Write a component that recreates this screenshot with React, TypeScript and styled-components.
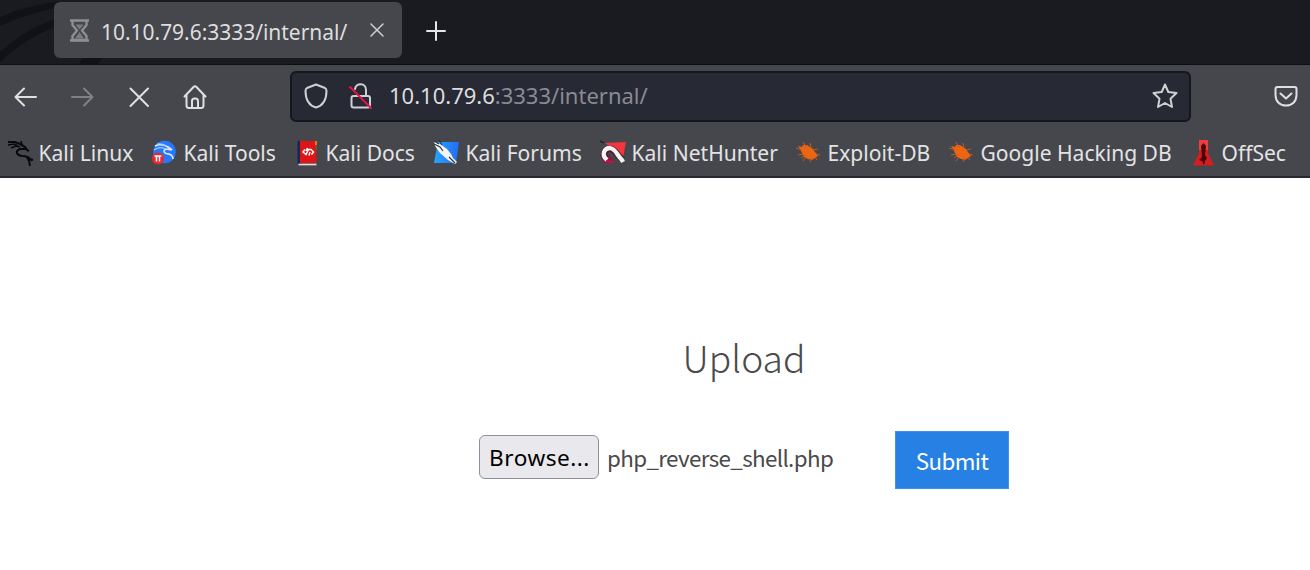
import React from 'react';
import styled, { createGlobalStyle } from 'styled-components';

const GlobalStyle = createGlobalStyle`
  * { box-sizing: border-box; }
  body { margin: 0; background: #fff; font-family: "Noto Sans", sans-serif; overflow: hidden; }
  svg { display: block; flex: none; overflow: visible; }
`;

const Window = styled.div`
  width: 1310px;
  height: 570px;
  display: flex;
  flex-direction: column;
  background: #fff;
`;

const TabStrip = styled.header`
  position: relative;
  height: 65px;
  flex: none;
  display: flex;
  align-items: flex-start;
  padding: 2px 0 0 54px;
  background: #1a1b20;
  border-bottom: 1px solid #0d0e11;
`;

const Wallpaper = styled.svg`
  position: absolute;
  left: 0;
  top: 0;
`;

const Tab = styled.div`
  position: relative;
  width: 348px;
  height: 56px;
  display: flex;
  align-items: center;
  padding: 0 18px 0 16px;
  border-radius: 6px;
  background: #45474d;
`;

const TabTitle = styled.span`
  margin: 3px auto 0 12px;
  font-size: 20.95px;
  line-height: 30px;
  color: #dededf;
  white-space: nowrap;
`;

const NewTab = styled.div`
  margin: 19px 0 0 24px;
`;

const Toolbar = styled.nav`
  height: 64px;
  flex: none;
  display: flex;
  align-items: center;
  padding: 0 12px 2px 0;
  background: #45474d;
`;

const NavButtons = styled.div`
  width: 290px;
  display: grid;
  grid-template-columns: 56px 57px 56px 57px;
  padding: 1px 0 0 13px;
  align-items: center;
`;

const UrlBar = styled.div`
  width: 901px;
  height: 51px;
  display: flex;
  align-items: center;
  padding: 0 11px 0 12px;
  background: #272935;
  border: 2px solid #16171d;
  border-radius: 6px;
`;

const SchemeIcon = styled.svg`
  margin-left: 20px;
`;

const Url = styled.span`
  margin: -2px auto 0 17px;
  font-size: 22px;
  line-height: 30px;
  color: #8a8b92;
  white-space: nowrap;
`;

const Host = styled.span`
  color: #dcdcdf;
`;

const Pocket = styled.div`
  margin-left: auto;
`;

const Bookmarks = styled.div`
  height: 49px;
  flex: none;
  display: grid;
  grid-template-columns: 145px 142px 140px 166px 196px 153px 241px 110px;
  align-items: center;
  padding: 0 0 0 7.500px;
  background: #45474d;
  border-bottom: 2px solid #28292e;
`;

const Bookmark = styled.div`
  display: flex;
  align-items: center;
  gap: 7px;
  font-size: 21.05px;
  line-height: 30px;
  color: #e3e3e4;
  white-space: nowrap;
`;

const Page = styled.main`
  flex: 1;
  display: flex;
  flex-direction: column;
  align-items: center;
  padding: 149px 0 0 178px;
  font-family: "Noto Sans CJK SC", sans-serif;
`;

const Title = styled.h1`
  margin: 0;
  height: 60px;
  font-size: 37.2px;
  line-height: 60px;
  font-weight: 300;
  color: #4a4a4a;
`;

const Form = styled.div`
  display: flex;
  align-items: flex-start;
  width: 530px;
  margin-top: 44px;
`;

const Browse = styled.button`
  width: 120px;
  height: 44px;
  margin: 4px 0 0 0;
  padding: 1px 0 0 1px;
  border: 1.5px solid #8f8f9d;
  border-radius: 6px;
  background: #e9e9ed;
  color: #000;
  font: 22.6px/40px "Noto Sans", sans-serif;
  letter-spacing: 0.5px;
  white-space: nowrap;
`;

const FileName = styled.span`
  margin: 8px 0 0 8px;
  width: 288px;
  font-size: 22.4px;
  letter-spacing: -0.64px;
  line-height: 36px;
  color: #4a4a4a;
  white-space: nowrap;
`;

const Submit = styled.button`
  width: 114px;
  height: 58px;
  padding: 0;
  border: 1px solid #4490e8;
  background: #2780e3;
  color: #fff;
  font: 22.4px/56px "Noto Sans CJK SC", sans-serif;
  letter-spacing: -0.6px;
`;

const line = {
  fill: 'none',
  strokeWidth: 2,
  strokeLinecap: 'round' as const,
  strokeLinejoin: 'round' as const,
};

const Exploit = () => (
  <svg width="24" height="24" viewBox="0 0 24 24">
    <path d="M1 5L5 6L6 4L10 4L13 6L16 8L18 11L21 15L18 17L15 19L11 18L7 16L5 12L3 8Z" fill="#ed6510" />
    <path d="M-1 7l6 2M1 14l5-1M6 1l3 5M13 2l1 5M16 9l5-1M19 13l4 1M6 20l3-4M13 21l2-4M4 17l4-3M18 16l2 3" stroke="#b85d2a" strokeWidth="1" fill="none" />
  </svg>
);

const icons: Record<string, React.ReactNode> = {
  linux: (
    <svg width="24" height="28" viewBox="0 0 24 28">
      <path d="M0 3L7 3L12 5L17 8L19 11L21 12" fill="none" stroke="#08090a" strokeWidth="2.2" />
      <path d="M0 6L6 5L10 7M3 9L8 7L12 8M14 6L13 2" fill="none" stroke="#08090a" strokeWidth="1.6" />
      <path d="M18 10L12 10C7 12 8 16 14 17C20 17 22 19 24 22M19 18L21 22L22 27M21 20L25 21" fill="none" stroke="#08090a" strokeWidth="2" />
    </svg>
  ),
  tools: (
    <svg width="24" height="26" viewBox="0 0 24 26">
      <circle cx="11.5" cy="12" r="11.3" fill="#2878fb" />
      <path d="M2 6Q8 3 15 7L19 10L13 9Q9 11 13 13.500Q20 14 20 19" fill="none" stroke="#dceaff" strokeWidth="1.6" />
      <path d="M1 10Q7 6 12 9M4 4Q9 3 13 6" fill="none" stroke="#a0c8ff" strokeWidth="1.2" />
      <circle cx="5" cy="18.500" r="6" fill="#ea2832" />
      <path d="M1.500 16H8.500M3.500 16V21.500M6.500 16V21.500" stroke="#fff" strokeWidth="1.5" />
    </svg>
  ),
  docs: (
    <svg width="24" height="26" viewBox="0 0 24 26">
      <path d="M2.500 1H7V24H2.500Z" fill="#17265a" />
      <path d="M5 1H21.500V23H5Z" fill="#df1417" />
      <path d="M20 1h2v4h-2z" fill="#e87417" />
      <path d="M20.500 5h1.500v5h-1.500z" fill="#526a30" />
      <path d="M3.500 24.500H21.500" stroke="#e7d7dd" strokeWidth="1.700" />
      <path d="M10 9.500L8 12L11 14.500L13.500 9.500L16 9.500L18.500 12L16.500 14.500M12.500 8L11 11M15 12L14 15.500" fill="none" stroke="#fff" strokeWidth="1.500" />
    </svg>
  ),
  forums: (
    <svg width="24" height="26" viewBox="0 0 24 26">
      <defs>
        <linearGradient id="sky"><stop stopColor="#27a6fc" /><stop offset="1" stopColor="#246cf8" /></linearGradient>
      </defs>
      <path d="M3 2H24L21 23H-1Z" fill="url(#sky)" />
      <path d="M-1 1L5 4L12 9L16 14L18 18L22 22L20 24L13 20L5 13L0 6Z" fill="#f4f5f4" />
      <path d="M-1 1L4 4M-1 4L5 7L8 11M4 0L7 5M14 17L20 23" fill="none" stroke="#293640" strokeWidth="1.2" />
    </svg>
  ),
  nethunter: (
    <svg width="24" height="26" viewBox="0 0 24 26">
      <path d="M4 3L25 2L22 18L12 9Z" fill="#f4353d" />
      <path d="M-1 15L3 23H14L8 15Z" fill="#981238" />
      <path d="M5 18C1 14 4 8 10 9C15 10 16 16 22 20" fill="none" stroke="#4b222d" strokeWidth="6.500" />
      <path d="M6 20C0 15 3 8 9 8C15 9 15 14 21 20L22 22" fill="none" stroke="#f5f5f5" strokeWidth="4.300" />
      <path d="M5 21L13 22" stroke="#bd194a" strokeWidth="2" />
      <path d="M-1 1L3 3" stroke="#252129" strokeWidth="1.500" />
    </svg>
  ),
  exploit: <Exploit />,
  offsec: (
    <svg width="24" height="28" viewBox="0 0 24 28">
      <path d="M8 1H17V14L23 26.500H2L8 14Z" fill="#d41e22" />
      <path d="M8 1H17V11H8Z" fill="#f03b3f" />
      <path d="M12.500 4L15 7L14 16L16 19L14 22L13 26L11 22L8 21L11 18L10 7Z" fill="#4a0508" />
    </svg>
  ),
};

const bookmarks = [
  ['linux', 'Kali Linux'],
  ['tools', 'Kali Tools'],
  ['docs', 'Kali Docs'],
  ['forums', 'Kali Forums'],
  ['nethunter', 'Kali NetHunter'],
  ['exploit', 'Exploit-DB'],
  ['exploit', 'Google Hacking DB'],
  ['offsec', 'OffSec'],
];

export default function App() {
  return (
    <Window>
      <GlobalStyle />
      <TabStrip>
        <Wallpaper width="110" height="64" viewBox="0 0 110 64">
          <path d="M0 17Q25 6 60 1V7Q25 14 0 26ZM0 52Q25 29 60 17V25Q25 38 0 62ZM79 64L83 57H102L98 64Z" fill="#111216" />
        </Wallpaper>
        <Tab>
          <svg width="19" height="23" viewBox="0 0 19 23">
            <path d="M0 1.500H19M0 21.500H19" stroke="#8d8e93" strokeWidth="2.600" />
            <path d="M2.500 2V6L7 11.500L2.500 17V21H16.500V17L12 11.500L16.500 6V2" fill="none" stroke="#8d8e93" strokeWidth="2.400" />
            <path d="M5.500 5.500H13.500L9.500 10.500ZM5 19.500L9.500 13L14 19.500Z" fill="#7b7c82" />
          </svg>
          <TabTitle>10.10.79.6:3333/internal/</TabTitle>
          <svg width="14" height="14" viewBox="0 0 14 14" stroke="#cfcfd2" {...line} strokeWidth="1.5">
            <path d="M1 1L13 13M13 1L1 13" />
          </svg>
        </Tab>
        <NewTab>
          <svg width="20" height="20" viewBox="0 0 20 20" stroke="#e6e6e8" {...line}>
            <path d="M1 10H19M10 1V19" />
          </svg>
        </NewTab>
      </TabStrip>
      <Toolbar>
        <NavButtons>
          <svg width="26" height="24" viewBox="0 0 26 24" stroke="#e0e0e1" {...line}>
            <path d="M23 12H3M11 3.500L2.500 12L11 20.500" />
          </svg>
          <svg width="26" height="24" viewBox="0 0 26 24" stroke="#808186" {...line}>
            <path d="M3 12H23M15 3.500L23.500 12L15 20.500" />
          </svg>
          <svg width="26" height="24" viewBox="0 0 26 24" stroke="#e0e0e1" {...line}>
            <path d="M4.500 3.500L22 21M22 3.500L4.500 21" />
          </svg>
          <svg width="26" height="26" viewBox="0 0 26 26" stroke="#e0e0e1" {...line}>
            <path d="M2.500 12.500L11.500 3Q13 1.500 14.500 3L23.500 12.500M4.500 11V21.500Q4.500 24 7 24H19Q21.500 24 21.500 21.500V11M10 24V17Q10 14.500 12.500 14.500H13.500Q16 14.500 16 17V24" />
          </svg>
        </NavButtons>
        <UrlBar>
          <svg width="24" height="26" viewBox="0 0 24 26" stroke="#d0d0d3" {...line}>
            <path d="M12 1.500L21 5Q22.500 6 22.500 8C22.500 16 19 22.500 12 24.500C5 22.500 1.500 16 1.500 8Q1.500 6 3 5Z" />
          </svg>
          <SchemeIcon width="24" height="26" viewBox="0 0 24 26" stroke="#d0d0d3" {...line}>
            <path d="M7 6C8 -.5 18 -.5 18 7V13M8 13H20Q22 13 22 15V22.500Q22 24.500 20 24.500H5.500Q3.500 24.500 3.500 22.500V15Q3.500 13 5.500 13H8" />
            <path d="M2 4L23 25" stroke="#e21547" />
          </SchemeIcon>
          <Url><Host>10.10.79.6</Host>:3333/internal/</Url>
          <svg width="26" height="26" viewBox="0 0 26 26" stroke="#d0d0d3" {...line}>
            <path d="M13 1.500L16.300 9L24.500 10L18.500 15.700L20 24L13 20L6 24L7.500 15.700L1.500 10L9.700 9Z" />
          </svg>
        </UrlBar>
        <Pocket>
          <svg width="24" height="22" viewBox="0 0 24 22" stroke="#e0e0e1" {...line}>
            <path d="M3.500 2H20.500Q22.500 2 22.500 4V10C22.500 16.500 18 20.500 12 20.500C6 20.500 1.500 16.500 1.500 10V4Q1.500 2 3.500 2ZM6.500 8.500L12 13.500L17.500 8.500" />
          </svg>
        </Pocket>
      </Toolbar>
      <Bookmarks>
        {bookmarks.map(([icon, label]) => (
          <Bookmark key={label}>{icons[icon]}{label}</Bookmark>
        ))}
      </Bookmarks>
      <Page>
        <Title>Upload</Title>
        <Form>
          <Browse>Browse...</Browse>
          <FileName>php_reverse_shell.php</FileName>
          <Submit>Submit</Submit>
        </Form>
      </Page>
    </Window>
  );
}
